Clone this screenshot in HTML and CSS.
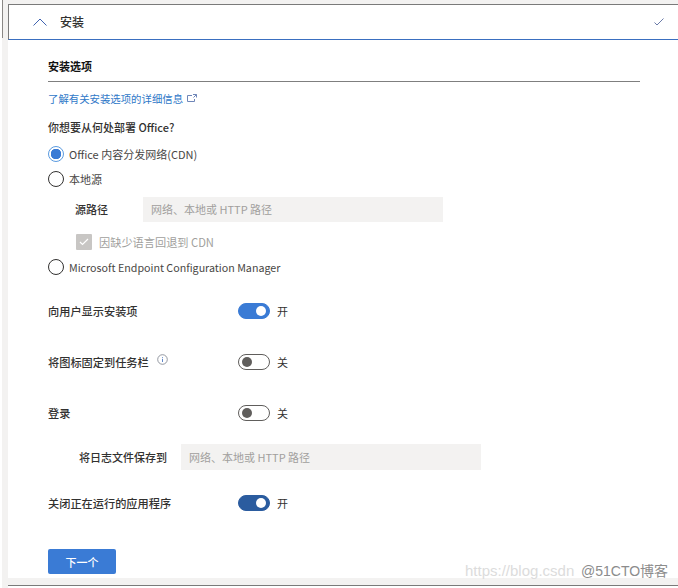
FILE: index.html
```html
<!doctype html>
<html>

<head>
  <meta charset="UTF-8">
  <title>安装</title>
  <link rel="stylesheet" href="styles.css">
</head>

<body>
  <div class="stub"></div>

  <div class="panel">
    <div class="head">
      <svg class="chev" width="14" height="8" viewBox="0 0 14 8"><path d="M0.500 7.500L7 1L13.500 7.500" fill="none" stroke="#3f62b0" stroke-width="1"/></svg>
      <span class="head-title">安装</span>
      <svg class="tick" width="10" height="8" viewBox="0 0 10 8"><path d="M0.500 4.500L3 7L9.500 0.500" fill="none" stroke="#6b7ba8" stroke-width="1"/></svg>
    </div>

    <div class="body">
      <h3 class="section">安装选项</h3>
      <a class="link">了解有关安装选项的详细信息
        <svg width="10" height="8" viewBox="0 0 10 8"><path d="M5 1.500H0.500V7.500H7.500V5M6 0.500H9.500V3.500M9.500 0.500L6.500 3.500" fill="none" stroke="#6f86b8" stroke-width="1"/></svg>
      </a>

      <div class="question">你想要从何处部署 Office?</div>
      <div class="radio on"><span class="dot"></span>Office 内容分发网络(CDN)</div>
      <div class="radio"><span class="dot"></span>本地源</div>
      <div class="src-row">
        <span class="src-label">源路径</span>
        <div class="field src-field">网络、本地或 HTTP 路径</div>
      </div>
      <div class="check-row">
        <span class="check"><svg width="12" height="10" viewBox="0 0 12 10"><path d="M2 5L4.500 7.500L10 2" fill="none" stroke="#fff" stroke-width="1.200"/></svg></span>
        因缺少语言回退到 CDN
      </div>
      <div class="radio long"><span class="dot"></span>Microsoft Endpoint Configuration Manager</div>

      <div class="toggle-row first">
        <div class="toggle-label">向用户显示安装项</div>
        <span class="toggle on"></span><span class="state">开</span>
      </div>
      <div class="toggle-row">
        <div class="toggle-label">将图标固定到任务栏
          <svg class="info" width="11" height="11" viewBox="0 0 11 11"><circle cx="5.500" cy="5.500" r="4.800" fill="none" stroke="#7a7f8a" stroke-width="0.800"/><path d="M5.500 3V3.800M5.500 4.800V8" stroke="#5f86c8" stroke-width="1"/></svg>
        </div>
        <span class="toggle"></span><span class="state">关</span>
      </div>
      <div class="toggle-row">
        <div class="toggle-label">登录</div>
        <span class="toggle"></span><span class="state">关</span>
      </div>
      <div class="log-row">
        <span class="log-label">将日志文件保存到</span>
        <div class="field log-field">网络、本地或 HTTP 路径</div>
      </div>
      <div class="toggle-row last">
        <div class="toggle-label">关闭正在运行的应用程序</div>
        <span class="toggle on dark"></span><span class="state">开</span>
      </div>

      <button class="next">下一个</button>
    </div>
  </div>

  <div class="mark"><span class="mark-url">https://blog.csdn</span><span class="mark-cto">@51CTO博客</span></div>
  <div class="foot"></div>
</body>

</html>
```

FILE: styles.css
```css
* {
  margin: 0;
  padding: 0;
  box-sizing: border-box;
}

html {
  background: #fff;
}

body {
  height: 588px;
  overflow: hidden;
  position: relative;
  margin-left: 2px;
  background: #f3f2f1;
  font-family: "Noto Sans CJK SC", "Noto Sans", sans-serif;
  font-size: 11px;
  color: #323130;
  padding: 4px 0 0 6px;
}

.stub {
  position: absolute;
  left: 0;
  top: 0;
  width: 1px;
  height: 38px;
  background: #8a8886;
}

.panel {
  background: #fff;
  height: 574px;
}

.head {
  height: 36px;
  display: flex;
  align-items: center;
  border-top: 1px solid #7a7a7a;
  border-left: 1px solid #7a7a7a;
  border-bottom: 1px solid #3a6fc0;
  padding: 0 14px 1px 24px;
}

.head-title {
  margin-left: 13px;
  font-size: 12px;
  font-weight: 500;
  flex: 1;
}

.body {
  padding: 17px 38px 0 40px;
}

.section {
  font-size: 11px;
  font-weight: 700;
  color: #111;
  height: 25px;
  line-height: 19px;
  border-bottom: 1px solid #7f7f7f;
}

.link {
  display: flex;
  align-items: center;
  gap: 4px;
  height: 16px;
  margin-top: 8px;
  color: #2f78c8;
  font-size: 10.400px;
}

.question {
  margin-top: 12px;
  height: 19px;
  line-height: 18px;
  font-weight: 500;
}

.radio {
  display: flex;
  align-items: center;
  gap: 5px;
  height: 16px;
  margin-top: 9px;
  color: #484644;
}

.radio.long {
  font-size: 10.700px;
}

.dot {
  width: 16px;
  height: 16px;
  border-radius: 50%;
  border: 1px solid #323130;
  background: #fff;
  flex: none;
}

.radio.on .dot {
  border-color: #5b9be0;
  background: radial-gradient(circle, #3a7bd5 0, #3a7bd5 5px, #fff 5.500px);
}

.src-row {
  display: flex;
  align-items: center;
  height: 26px;
  margin-top: 9px;
}

.src-label {
  margin-left: 27px;
  width: 68px;
  font-weight: 500;
}

.field {
  height: 25px;
  line-height: 25px;
  background: #f3f2f1;
  color: #a19f9d;
  padding-left: 8px;
}

.src-field {
  width: 300px;
}

.check-row {
  display: flex;
  align-items: center;
  gap: 7px;
  margin: 12px 0 0 28px;
  height: 16px;
  font-size: 11.200px;
  color: #a19f9d;
}

.check {
  width: 16px;
  height: 16px;
  border-radius: 1px;
  background: #c8c6c4;
  display: flex;
  align-items: center;
  justify-content: center;
}

.toggle-row {
  display: flex;
  align-items: center;
  height: 16px;
  margin-top: 35px;
}

.toggle-row.first {
  margin-top: 28px;
}

.toggle-label {
  width: 190px;
  font-size: 11.200px;
  font-weight: 500;
  position: relative;
}

.info {
  position: absolute;
  left: 109px;
  top: 0;
}

.toggle {
  position: relative;
  width: 32px;
  height: 16px;
  border-radius: 8px;
  border: 1px solid #605e5c;
  background: #fff;
}

.toggle::after {
  content: "";
  position: absolute;
  left: 3px;
  top: 2px;
  width: 10px;
  height: 10px;
  border-radius: 50%;
  background: #605e5c;
}

.toggle.on {
  background: #3a7bd5;
  border-color: #3a7bd5;
}

.toggle.on::after {
  left: auto;
  right: 3px;
  background: #fff;
}

.toggle.dark {
  background: #2b5c9f;
  border-color: #2b5c9f;
}

.state {
  margin-left: 7px;
}

.log-row {
  display: flex;
  align-items: center;
  height: 26px;
  margin-top: 23px;
}

.log-label {
  margin-left: 31px;
  width: 102px;
  font-weight: 500;
}

.log-field {
  width: 300px;
  height: 26px;
  line-height: 26px;
}

.toggle-row.last {
  margin-top: 25px;
}

.next {
  display: block;
  margin-top: 38px;
  width: 68px;
  height: 25px;
  border: none;
  border-radius: 2px;
  background: #3a7bd5;
  color: #fff;
  font-family: inherit;
  font-size: 11px;
  font-weight: 500;
}

.mark {
  position: absolute;
  left: 463px;
  top: 559px;
  white-space: nowrap;
  font-family: "Liberation Sans", sans-serif;
  font-size: 15px;
  line-height: 24px;
}

.mark-url {
  color: #dcdcdc;
}

.mark-cto {
  position: absolute;
  left: 116px;
  top: 0;
  color: #8c8c8c;
  font-family: "Liberation Sans", "Noto Sans CJK SC", sans-serif;
  font-size: 14px;
}

.foot {
  position: absolute;
  left: 6px;
  right: 0;
  bottom: 0;
  height: 3px;
  border-top: 1px solid #7a7a7a;
  background: #fff;
}
```
